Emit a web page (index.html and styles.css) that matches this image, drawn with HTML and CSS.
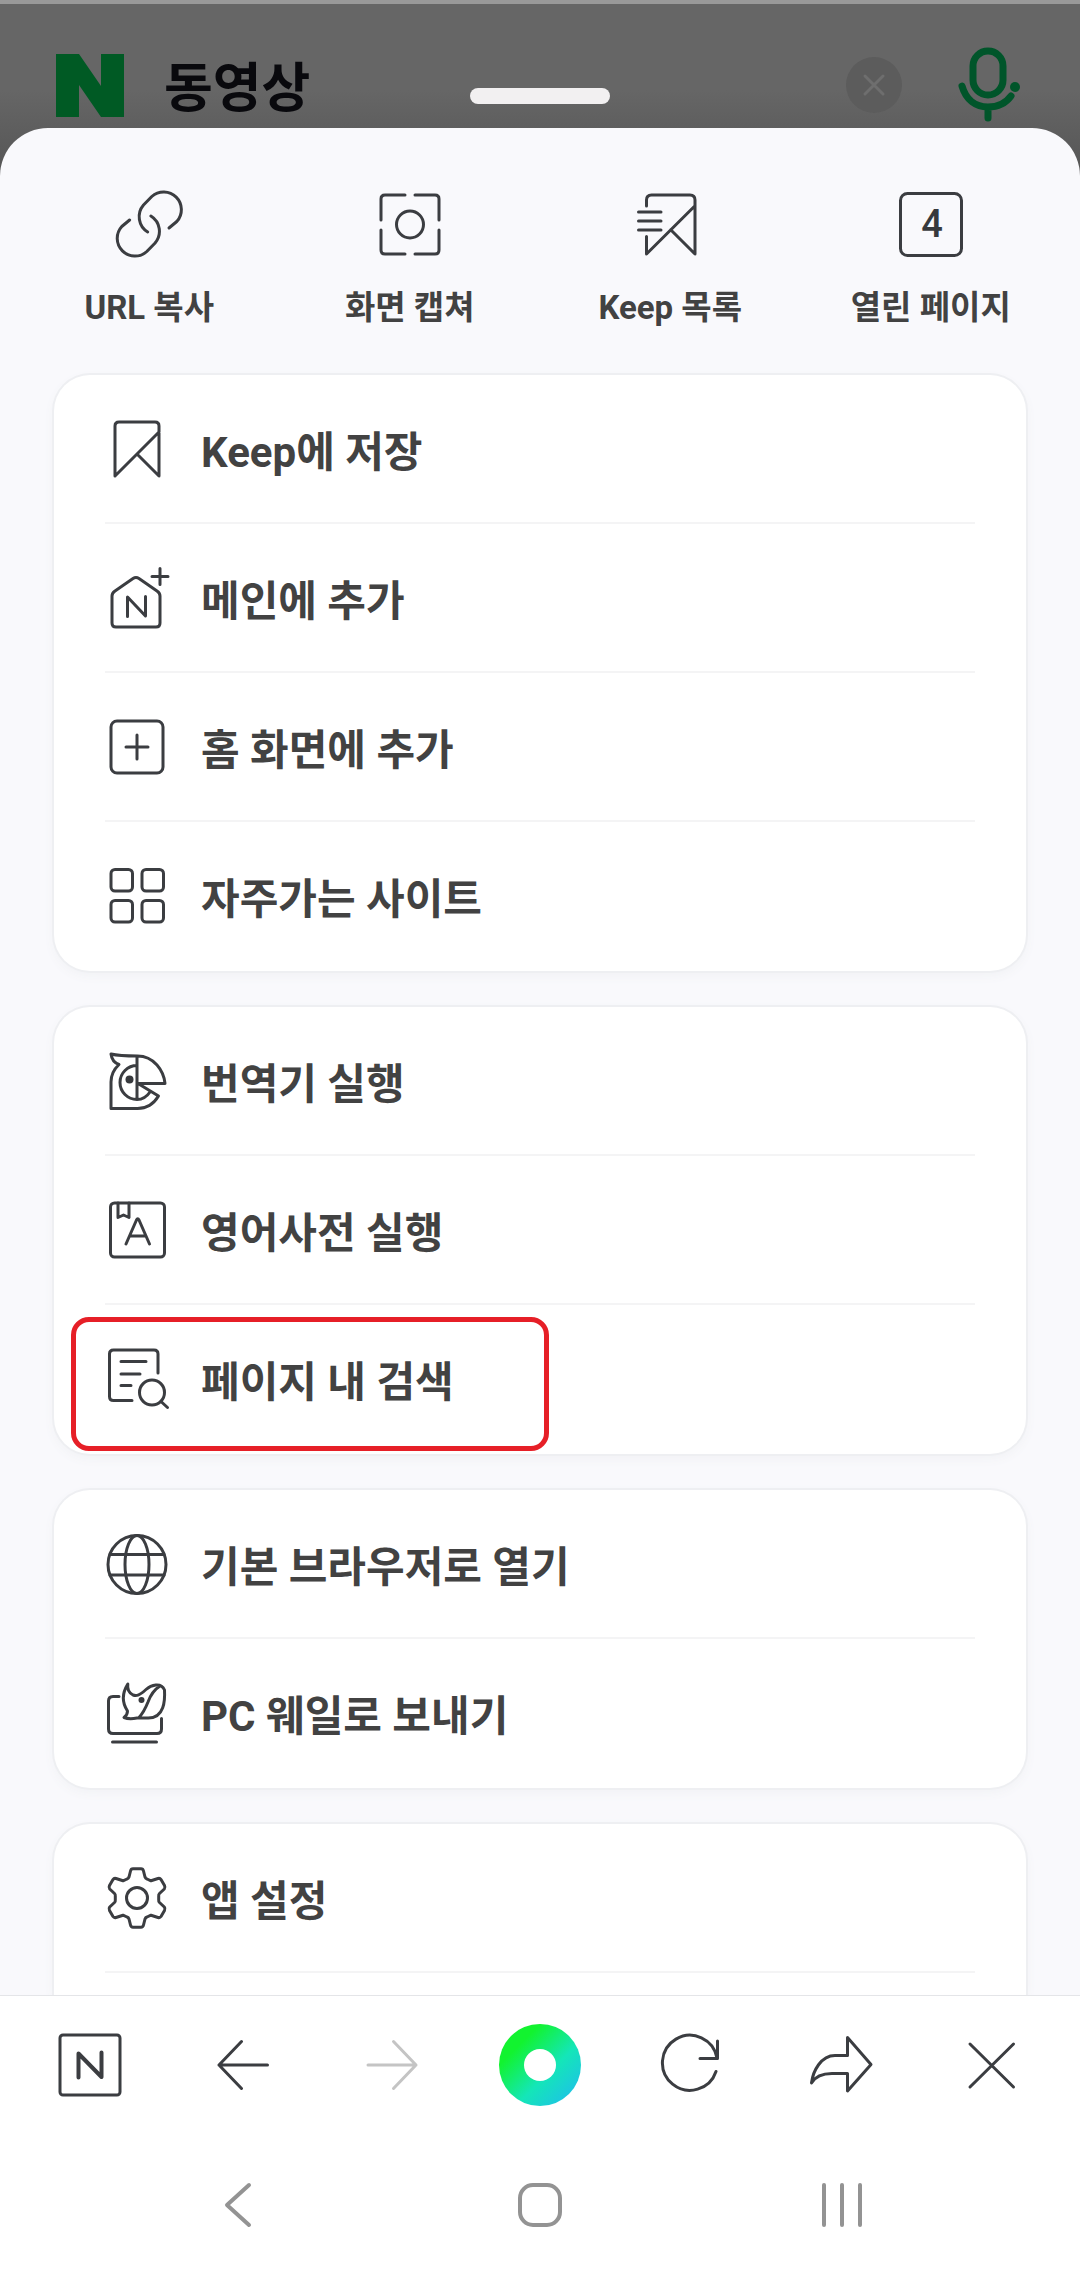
FILE: index.html
```html
<!DOCTYPE html>
<html lang="ko">
<head>
<meta charset="utf-8">
<meta name="viewport" content="width=device-width, initial-scale=1">
<title>동영상</title>
<link rel="stylesheet" href="styles.css">
</head>
<body>
<div class="app">
  <header class="search">
    <svg class="search-logo" viewBox="0 0 68 63" aria-hidden="true"><path d="M0 0H23L45 32V0H68V63H45L23 31V63H0Z"/></svg>
    <input class="search-input" type="text" value="동영상" aria-label="검색어">
    <button class="search-clear" type="button" aria-label="지우기">
      <svg viewBox="0 0 56 56"><path d="M19 19 37 37M37 19 19 37"/></svg>
    </button>
    <button class="search-mic" type="button" aria-label="음성 검색">
      <svg viewBox="0 0 64 76">
        <rect x="15" y="4" width="30" height="44" rx="15"/>
        <path d="M4 39C8 53 18 60 30 60C40 60 48 56 53 49M30 60V71"/>
        <circle cx="57" cy="40" r="5"/>
      </svg>
    </button>
    <span class="handle"></span>
  </header>

  <main class="sheet">
    <nav class="quick">
      <button class="quick-item" type="button">
        <svg class="quick-icon" viewBox="0 0 72 72">
          <path d="M56 40 63.800 33.500A17.700 17.700 0 0 0 38.800 8.500L30.500 17A18 18 0 0 0 34.700 44"/>
          <path transform="rotate(180 36.300 36)" d="M56 40 63.800 33.500A17.700 17.700 0 0 0 38.800 8.500L30.500 17A18 18 0 0 0 34.700 44"/>
        </svg>
        <span>URL 복사</span>
      </button>
      <button class="quick-item" type="button">
        <svg class="quick-icon" viewBox="0 0 72 72">
          <path d="M31 7H11Q7 7 7 11V32M41 7H61Q65 7 65 11V32M7 42V62Q7 66 11 66H31M65 42V62Q65 66 61 66H41"/>
          <circle cx="36" cy="36.500" r="13.500"/>
        </svg>
        <span>화면 캡쳐</span>
      </button>
      <button class="quick-item" type="button">
        <svg class="quick-icon" viewBox="0 0 72 72">
          <path d="M12.500 18V12Q12.500 7 17.500 7H56Q61 7 61 12V66L36.700 41.700M12.500 48.500V66L61 17.700M4.500 24H27M4.500 33H27M4.500 42H27"/>
        </svg>
        <span>Keep 목록</span>
      </button>
      <button class="quick-item" type="button">
        <svg class="quick-icon" viewBox="0 0 72 72">
          <rect x="5.500" y="5.500" width="61" height="62" rx="7"/>
          <text class="tab-count" x="37" y="49">4</text>
        </svg>
        <span>열린 페이지</span>
      </button>
    </nav>

    <ul class="card">
      <li><button class="row" type="button">
        <svg class="row-icon" viewBox="0 0 60 60"><path d="M8 57V7Q8 3 12 3H48Q52 3 52 7V57L30 35M8 57 52 13"/></svg>
        Keep에 저장</button></li>
      <li><button class="row" type="button">
        <svg class="row-icon" viewBox="0 0 60 60"><path d="M5 28Q5 25 8 23L26 10.500Q29 8.500 32 10.500L50 23Q53 25 53 28V55Q53 59 49 59H9Q5 59 5 55ZM20.500 48.500V29L38.500 48V28.500M45 8.500H61M53 .5V16.500"/></svg>
        메인에 추가</button></li>
      <li><button class="row" type="button">
        <svg class="row-icon" viewBox="0 0 60 60"><rect x="4" y="4" width="52" height="52" rx="6"/><path d="M19 30H41M30 18V42"/></svg>
        홈 화면에 추가</button></li>
      <li><button class="row" type="button">
        <svg class="row-icon" viewBox="0 0 60 60"><rect x="4" y="3.500" width="21.500" height="21.500" rx="4"/><rect x="35" y="3.500" width="21.500" height="21.500" rx="4"/><rect x="4" y="34.500" width="21.500" height="21.500" rx="4"/><rect x="35" y="34.500" width="21.500" height="21.500" rx="4"/></svg>
        자주가는 사이트</button></li>
    </ul>

    <ul class="card">
      <li><button class="row" type="button">
        <svg class="row-icon" viewBox="0 0 60 60"><path d="M4 3Q12 5 30.500 5Q42 5 50 14Q57 22 58 32.500H31L51.500 45Q44 57.500 30.500 57.500H4V31Q4 21 12 13.500Q5 11 4 3ZM30 5V48.500M30 14.500A17 17 0 0 0 30 48.500Q38 48.500 43 41"/><circle class="solid" cx="22.500" cy="28.500" r="4"/></svg>
        번역기 실행</button></li>
      <li><button class="row" type="button">
        <svg class="row-icon" viewBox="0 0 60 60"><rect x="3.500" y="3" width="54" height="54" rx="4"/><path d="M11 3V17.500L16.500 15 22 17.500V3M19 44 29.500 20Q30.700 17.500 32 20L42.500 44M22.500 36H39"/></svg>
        영어사전 실행</button></li>
      <li class="marked"><button class="row" type="button">
        <svg class="row-icon" viewBox="0 0 60 60"><path d="M51 24V5Q51 1 47 1H6.500Q2.500 1 2.500 5V47.500Q2.500 51.500 6.500 51.500H25M14 12.500H39M14 25H33M14 36.500H24M54 52.500 60.500 58.500"/><circle cx="45" cy="43.500" r="12.500"/></svg>
        페이지 내 검색</button></li>
    </ul>

    <ul class="card">
      <li><button class="row" type="button">
        <svg class="row-icon" viewBox="0 0 60 60"><circle cx="30" cy="30.500" r="29"/><ellipse cx="30" cy="30.500" rx="12" ry="29"/><path d="M3 20.500H57M3 41H57"/></svg>
        기본 브라우저로 열기</button></li>
      <li><button class="row" type="button">
        <svg class="row-icon" viewBox="0 0 60 60"><path d="M12 13.500H6Q1.500 13.500 1.500 18V46Q1.500 50.500 6 50.500H50Q54.500 50.500 54.500 46V35.500M5.500 59H49.500"/><path d="M20.800 1Q12 15 20.500 28Q20.500 32 17 34.500Q22 36.500 30 35H40C58 36 58 16 57.500 7C54 -1 44 2 39 6.500C32 13 29 13 26 12C22 10 20 7 20.800 1ZM53 3Q45 8 41 19Q37 29 32 34.500"/><circle class="solid" cx="34.500" cy="17" r="3"/></svg>
        PC 웨일로 보내기</button></li>
    </ul>

    <ul class="card card-last">
      <li><button class="row" type="button">
        <svg class="row-icon" viewBox="0 0 60 60"><path d="M26 .8H34Q36 .8 36.500 3L38 9Q38.500 10.500 40 11L44 12.800 51 10.500Q53 10 54 11.500L57.500 17.500Q58.500 19.500 57.300 21L52.500 25.500Q51.500 26.500 51.700 28V32Q51.500 33.500 52.500 34.500L57.300 39Q58.500 40.500 57.500 42.500L54 48.500Q53 50 51 49.500L44 47.200 40 49Q38.500 49.500 38 51L36.500 57Q36 59.200 34 59.200H26Q24 59.200 23.500 57L22 51Q21.500 49.500 20 49L16 47.200 9 49.500Q7 50 6 48.500L2.500 42.500Q1.500 40.500 2.700 39L7.500 34.500Q8.500 33.500 8.300 32V28Q8.500 26.500 7.500 25.500L2.700 21Q1.500 19.500 2.500 17.500L6 11.500Q7 10 9 10.500L16 12.800 20 11Q21.500 10.500 22 9L23.500 3Q24 .8 26 .8Z"/><circle cx="30" cy="30" r="10.500"/></svg>
        앱 설정</button></li>
      <li></li>
    </ul>
  </main>

  <nav class="toolbar">
    <button type="button" aria-label="홈"><svg viewBox="0 0 64 64"><rect x="2" y="2" width="60" height="60" rx="3"/><path class="bold" d="M20.500 44.500V20.500L43.500 44V19.500"/></svg></button>
    <button type="button" aria-label="뒤로"><svg viewBox="0 0 64 64"><path d="M59.500 32H11M33.500 8.500 11 32 33.500 55.500"/></svg></button>
    <button type="button" aria-label="앞으로" disabled><svg viewBox="0 0 64 64"><path d="M10 32H58M35.500 8.500 58 32 35.500 55.500"/></svg></button>
    <button type="button" aria-label="그린닷"><span class="dot"></span></button>
    <button type="button" aria-label="새로고침"><svg viewBox="0 0 64 64"><path d="M58 38.500A27.500 27.500 0 1 1 59 25M59.500 8V25.500H42"/></svg></button>
    <button type="button" aria-label="공유"><svg viewBox="0 0 64 64"><path d="M39.500 4.500 63 31.500 39.500 58V40.500H24Q9 40.500 3.500 50C5 38 13 22.500 27 22.500H39.500Z"/></svg></button>
    <button type="button" aria-label="닫기"><svg viewBox="0 0 64 64"><path d="M12 11 55.500 54M55.500 11 12 54"/></svg></button>
  </nav>

  <nav class="system">
    <button type="button" aria-label="이전"><svg viewBox="0 0 48 48"><path d="M35 4 13 24 35 44"/></svg></button>
    <button type="button" aria-label="홈 화면"><svg viewBox="0 0 48 48"><rect x="4" y="4" width="40" height="40" rx="13"/></svg></button>
    <button type="button" aria-label="최근 앱"><svg viewBox="0 0 48 48"><path d="M6 4V44M24 4V44M42 4V44"/></svg></button>
  </nav>
</div>
</body>
</html>
```
FILE: styles.css
```css
*,
*::after {
  box-sizing: border-box;
}

body {
  margin: 0;
  background: #fff;
  color: #424242;
  font-family: Roboto, "Noto Sans CJK KR", sans-serif;
}

button {
  padding: 0;
  border: 0;
  background: none;
  color: inherit;
  font: inherit;
}

svg {
  display: block;
  overflow: visible;
  fill: none;
  stroke: #3b3d41;
  stroke-width: 3;
  stroke-linecap: round;
  stroke-linejoin: round;
}

.app {
  display: flex;
  flex-direction: column;
  min-height: 100vh;
}

/* dimmed search bar behind the sheet */
.search {
  position: relative;
  display: flex;
  align-items: center;
  height: 176px;
  margin-bottom: -48px;
  padding: 0 58px 10px 56px;
  border-top: 4px solid #999;
  background: linear-gradient(#666 50%, #555);
}

.search-logo {
  flex: none;
  width: 68px;
  height: 63px;
  fill: #005a24;
  stroke: none;
}

.search-input {
  flex: 1;
  min-width: 0;
  margin-left: 40px;
  padding: 8px 0 0;
  border: 0;
  outline: 0;
  background: none;
  color: #09090d;
  font: 700 53px/72px Roboto, "Noto Sans CJK KR", sans-serif;
}

.search-clear {
  width: 56px;
  height: 56px;
  margin-right: 56px;
  border-radius: 50%;
  background: #5c5c5c;
}

.search-clear svg {
  stroke: #6e6e6e;
}

.search-mic svg {
  width: 64px;
  height: 76px;
  stroke: #00552a;
  stroke-width: 7;
}

.search-mic circle {
  fill: #00552a;
  stroke: none;
}

.handle {
  position: absolute;
  top: 84px;
  left: 50%;
  width: 140px;
  height: 16px;
  border-radius: 8px;
  background: #f2f0f1;
  transform: translateX(-50%);
}

/* bottom sheet */
.sheet {
  position: relative;
  display: flex;
  flex: 1;
  flex-direction: column;
  gap: 36px;
  padding: 60px 54px 0;
  border-radius: 48px 48px 0 0;
  background: #f9f9fc;
}

.quick {
  display: grid;
  grid-template-columns: repeat(4, 1fr);
  margin: 0 -35px 9px;
}

.quick-item {
  display: flex;
  flex-direction: column;
  align-items: center;
  gap: 26px;
  font-size: 33px;
  font-weight: 700;
  line-height: 44px;
}

.quick-icon {
  width: 72px;
  height: 72px;
}

.tab-count {
  fill: #37393d;
  stroke: none;
  font-size: 38px;
  font-weight: 500;
  text-anchor: middle;
}

.card {
  margin: 0;
  padding: 0 51px 2px;
  border-radius: 36px;
  background: #fff;
  box-shadow: 0 0 0 2px #eeeff2, 0 4px 12px #f0f1f4;
  list-style: none;
}

.card li + li {
  border-top: 2px solid #f4f4f5;
}

.card-last {
  flex: 1;
  border-radius: 36px 36px 0 0;
}

.row {
  display: flex;
  align-items: center;
  gap: 34px;
  width: 100%;
  height: 147px;
  padding-left: 2px;
  font-size: 42px;
  font-weight: 700;
  text-align: left;
}

.row-icon {
  width: 60px;
  height: 60px;
}

.solid {
  fill: #37393d;
  stroke: none;
}

.marked {
  position: relative;
}

.marked::after {
  position: absolute;
  top: 12px;
  bottom: 1px;
  left: -34px;
  width: 478px;
  border: 5px solid #e61f27;
  border-radius: 18px;
  content: "";
}

/* browser toolbar and system keys */
.toolbar {
  position: relative;
  display: grid;
  grid-template-columns: repeat(7, 1fr);
  place-items: center;
  height: 138px;
  padding: 0 15px;
  border-top: 1px solid #e4e5e8;
  background: #fff;
}

.toolbar svg {
  width: 64px;
  height: 64px;
}

.toolbar .bold {
  stroke-width: 4;
}

.toolbar button:disabled svg {
  stroke: #c4c4c4;
}

.dot {
  display: block;
  width: 82px;
  height: 82px;
  border: 25px solid transparent;
  border-radius: 50%;
  background:
    linear-gradient(#fff, #fff) padding-box,
    linear-gradient(135deg, #12f32f 25%, #14e6b8 60%, #20b8f4) border-box;
}

.system {
  display: grid;
  grid-template-columns: repeat(3, 302px);
  place-content: center;
  place-items: center;
  height: 137px;
  padding-top: 6px;
}

.system svg {
  width: 48px;
  height: 48px;
  stroke: #939393;
  stroke-width: 4;
}
```
